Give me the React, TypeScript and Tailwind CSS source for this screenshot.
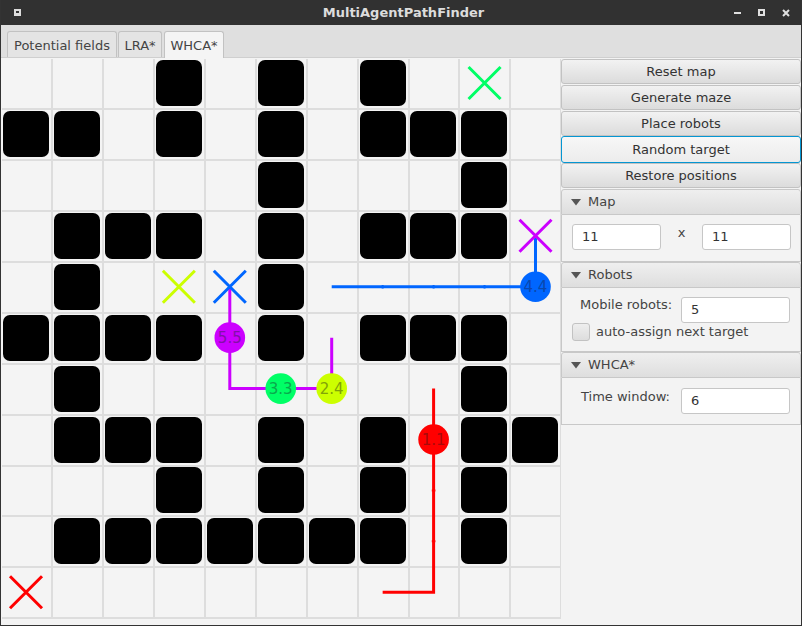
import React from "react";

const blocks: number[][] = [
  [3, 5, 7],
  [0, 1, 3, 5, 7, 8, 9],
  [5, 9],
  [1, 2, 3, 5, 7, 8, 9],
  [1, 5],
  [0, 1, 2, 3, 5, 7, 8, 9],
  [1, 9],
  [1, 2, 3, 5, 7, 9, 10],
  [3, 5, 7, 9],
  [1, 2, 3, 4, 5, 6, 7, 9],
  [],
];

const cx = (c: number) => 25 + c * 50.95;
const cy = (r: number) => 25 + r * 50.93;

function Cross({ c, r, color }: { c: number; r: number; color: string }) {
  const x = cx(c);
  const y = cy(r);
  return (
    <path d={`M${x - 16} ${y - 16}L${x + 16} ${y + 16}M${x + 16} ${y - 16}L${x - 16} ${y + 16}`} stroke={color} strokeWidth={3} fill="none" />
  );
}

function Robot({ c, r, color, text, textColor }: { c: number; r: number; color: string; text: string; textColor: string }) {
  return (
    <g>
      <circle cx={cx(c)} cy={cy(r)} r={15.3} fill={color} />
      <text x={cx(c)} y={cy(r) + 5.5} textAnchor="middle" fontSize={15} fontFamily="'DejaVu Sans', sans-serif" fill={textColor}>{text}</text>
    </g>
  );
}

function Btn({ label, focused }: { label: string; focused?: boolean }) {
  return (
    <button
      className={
        focused
          ? "-mt-px h-[27px] w-full shrink-0 rounded-[3px] border border-[#0596d2] bg-gradient-to-b from-[#f7f7f7] to-[#ececec] text-[13px] leading-none text-[#333333]"
          : "mb-px h-[25px] w-full shrink-0 rounded-[3px] border border-[#c2c2c2] bg-gradient-to-b from-[#f2f2f2] to-[#dcdcdc] text-[13px] leading-none text-[#333333]"
      }
    >
      {label}
    </button>
  );
}

function Header({ label }: { label: string }) {
  return (
    <div className="flex h-[26px] shrink-0 items-center gap-[7px] rounded-t-[3px] border border-[#c8c8c8] bg-gradient-to-b from-[#efefef] to-[#dedede] pl-[9px] text-[13px] text-[#444444]">
      <svg width="10" height="7" viewBox="0 0 10 7"><path d="M0 0H10L5 6.5Z" fill="#555555" /></svg>
      <span>{label}</span>
    </div>
  );
}

function Field({ value, className }: { value: string; className: string }) {
  return (
    <div className={`flex h-[26px] shrink-0 items-center rounded-[3px] border border-[#c6c6c6] bg-white pl-[9px] text-[13px] text-[#333333] ${className}`}>
      {value}
    </div>
  );
}

export default function App() {
  return (
    <div className="flex h-[626px] w-[802px] flex-col overflow-hidden border-x border-b border-[#333333] bg-[#f3f3f3] font-['DejaVu_Sans',sans-serif]">
      <div className="-mx-px flex h-[25px] shrink-0 items-center bg-[#313131] pl-[14px] pr-[12px]">
        <div className="flex-1">
          <div className="flex h-[7px] w-[7px] items-start justify-center bg-[#dddddd]"><div className="mt-[2px] h-[2px] w-[3px] bg-[#333333]" /></div>
        </div>
        <span className="pl-[3px] text-[13px] font-bold text-[#dcdcdc]">MultiAgentPathFinder</span>
        <div className="flex flex-1 items-center justify-end gap-[17px]">
          <div className="h-[2px] w-[7px] bg-[#e0e0e0]" />
          <div className="h-[7px] w-[7px] border-2 border-[#e0e0e0]" />
          <svg width="8" height="8" viewBox="0 0 8 8"><path d="M1 1L7 7M7 1L1 7" stroke="#e0e0e0" strokeWidth="2" /></svg>
        </div>
      </div>
      <div className="flex h-[33px] shrink-0 items-end border-b border-[#cfcfcf] bg-[#dfdfdf] pl-[6px]">
        <div className="flex h-[26px] w-[110px] items-center justify-center rounded-t-[3px] border border-b-0 border-[#c2c2c2] bg-[#e4e4e4] pt-[2px] text-[13px] text-[#444444]">Potential fields</div>
        <div className="ml-[1px] flex h-[26px] w-[44px] items-center justify-center rounded-t-[3px] border border-b-0 border-[#c2c2c2] bg-[#e4e4e4] pt-[2px] text-[13px] text-[#444444]">LRA*</div>
        <div className="ml-[2px] -mb-px flex h-[27px] w-[60px] items-center justify-center rounded-t-[3px] border border-b-0 border-[#c2c2c2] bg-[#f4f4f4] pt-[1px] text-[13px] text-[#444444]">WHCA*</div>
      </div>
      <div className="flex min-h-0 flex-1">
        <div className="relative h-[562px] w-[560px] shrink-0 overflow-hidden bg-[#f4f4f4]">
          <div className="ml-[1px] mt-[1px] grid grid-cols-[repeat(11,50.95px)] grid-rows-[repeat(11,50.95px)]">
            {blocks.map((row, r) =>
              Array.from({ length: 11 }, (_, c) => (
                <div key={`${r}-${c}`} className="flex items-center justify-center border-r-2 border-b-2 border-[#dddddd] bg-[#f4f4f4] pr-[1px] pb-[1px]">
                  {row.includes(c) && <div className="h-[46px] w-[46px] shrink-0 rounded-[7px] bg-black" />}
                </div>
              ))
            )}
          </div>
          <svg className="absolute left-0 top-0" width="560" height="562" viewBox="0 0 560 562">
            <g fill="none" strokeWidth={3}>
              <path d={`M${cx(10)} ${cy(3)}V${cy(4)}H${cx(6)}`} stroke="#0066ff" />
              <path d={`M${cx(4)} ${cy(4)}V${cy(6)}H${cx(6)}V${cy(5)}`} stroke="#cc00ff" />
              <path d={`M${cx(8)} ${cy(6)}V${cy(10)}H${cx(7)}`} stroke="#ff0000" />
            </g>
            <g fill="none" strokeWidth={3.6}>
              <path d={`M${cx(9) - 1} ${cy(4)}h2M${cx(8) - 1} ${cy(4)}h2M${cx(7) - 1} ${cy(4)}h2`} stroke="#0066ff" />
              <path d={`M${cx(8)} ${cy(8) - 1}v2M${cx(8)} ${cy(9) - 1}v2`} stroke="#ff0000" />
            </g>
            <Cross c={9} r={0} color="#00ff66" />
            <Cross c={10} r={3} color="#cc00ff" />
            <Cross c={3} r={4} color="#ccff00" />
            <Cross c={4} r={4} color="#0066ff" />
            <Cross c={0} r={10} color="#ff0000" />
            <Robot c={10} r={4} color="#0066ff" text="4.4" textColor="#0a47ad" />
            <Robot c={4} r={5} color="#cc00ff" text="5.5" textColor="#8210a8" />
            <Robot c={5} r={6} color="#00ff66" text="3.3" textColor="#0aa84d" />
            <Robot c={6} r={6} color="#ccff00" text="2.4" textColor="#82a308" />
            <Robot c={8} r={7} color="#ff0000" text="1.1" textColor="#a80a0a" />
          </svg>
        </div>
        <div className="flex min-w-0 flex-1 flex-col pt-[1px]">
          <Btn label="Reset map" />
          <Btn label="Generate maze" />
          <Btn label="Place robots" />
          <Btn label="Random target" focused />
          <Btn label="Restore positions" />
          <Header label="Map" />
          <div className="flex h-[47px] shrink-0 items-start border-x border-b border-[#c8c8c8] pl-[10px] pr-[9px] pt-[9px]">
            <Field value="11" className="w-[89px]" />
            <span className="w-[41px] shrink-0 text-center text-[13px] leading-[18px] text-[#444444]">x</span>
            <Field value="11" className="w-[89px]" />
          </div>
          <Header label="Robots" />
          <div className="h-[64px] shrink-0 border-x border-b border-[#c8c8c8] pl-[10px] pt-[9px]">
            <div className="flex items-start">
              <span className="w-[109px] pl-[8px] text-[13px] leading-[16px] text-[#444444]">Mobile robots:</span>
              <Field value="5" className="w-[109px]" />
            </div>
            <div className="flex items-center gap-[6px]">
              <div className="h-[18px] w-[18px] rounded-[3px] border border-[#c2c2c2] bg-gradient-to-b from-[#eeeeee] to-[#dddddd]" />
              <span className="text-[13px] leading-[18px] text-[#444444]">auto-assign next target</span>
            </div>
          </div>
          <Header label="WHCA*" />
          <div className="h-[47px] shrink-0 border-x border-b border-[#c8c8c8] pl-[10px] pt-[10px]">
            <div className="flex items-start">
              <span className="w-[109px] pl-[9px] text-[13px] leading-[17px] text-[#444444]">Time window:</span>
              <Field value="6" className="w-[109px]" />
            </div>
          </div>
        </div>
      </div>
    </div>
  );
}
